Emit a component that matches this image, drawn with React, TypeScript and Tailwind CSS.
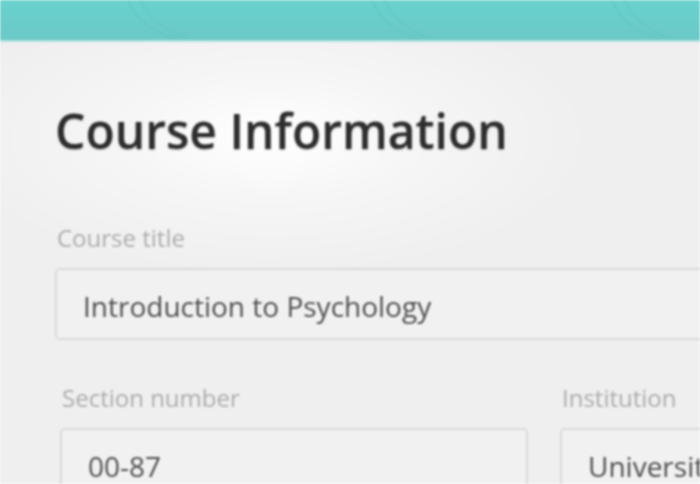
import React from "react";

function Field({ label, value, className = "" }: { label: string; value: string; className?: string }) {
  return (
    <div className={"flex flex-col " + className}>
      <div className="text-[24px] leading-[30px] text-[#acacac] pl-[2px]">{label}</div>
      <div className="mt-[15px] h-[72px] rounded-[5px] border-2 border-[#d9d9d9] bg-[#f1f1f1] flex items-center pl-[26px] pt-[3px] overflow-hidden">
        <span className="text-[28px] leading-[36px] font-medium text-[#4f4f4f] whitespace-nowrap">{value}</span>
      </div>
    </div>
  );
}

export default function App() {
  return (
    <div className="w-[700px] h-[484px] overflow-hidden bg-[#efefef] font-['Open_Sans',sans-serif] blur-[0.9px]">
      <div className="relative h-[40px] bg-[linear-gradient(#6ad2ce,#6bc8c6)] overflow-hidden">
        <svg className="absolute inset-0" width="700" height="40" viewBox="0 0 700 40">
          <g fill="none" stroke="#5fc3bf" strokeWidth="1.5" opacity="0.6">
            <path d="M128 0 C 135 18, 150 32, 178 40" />
            <path d="M140 0 C 147 16, 162 30, 190 40" />
            <path d="M372 0 C 379 18, 394 32, 422 40" />
            <path d="M384 0 C 391 16, 406 30, 434 40" />
            <path d="M612 0 C 619 18, 634 32, 662 40" />
            <path d="M624 0 C 631 16, 646 30, 674 40" />
          </g>
        </svg>
      </div>
      <div className="h-[2px] bg-[#b3e3e1]" />
      <div className="h-[442px] bg-[radial-gradient(ellipse_330px_140px_at_270px_95px,#ffffff_0%,#f6f6f6_45%,#efefef_100%)] pl-[55px] pt-[61px]">
        <h1 className="text-[48px] leading-[56px] font-semibold text-[#2e2e2e] [text-shadow:0_1px_2px_rgba(0,0,0,0.25)] whitespace-nowrap">
          Course Information
        </h1>
        <Field label="Course title" value="Introduction to Psychology" className="mt-[64px] w-[680px]" />
        <div className="mt-[43px] ml-[5px] grid grid-cols-[468px_400px] gap-[32px]">
          <Field label="Section number" value="00-87" />
          <Field label="Institution" value="University of Toronto" />
        </div>
      </div>
    </div>
  );
}
